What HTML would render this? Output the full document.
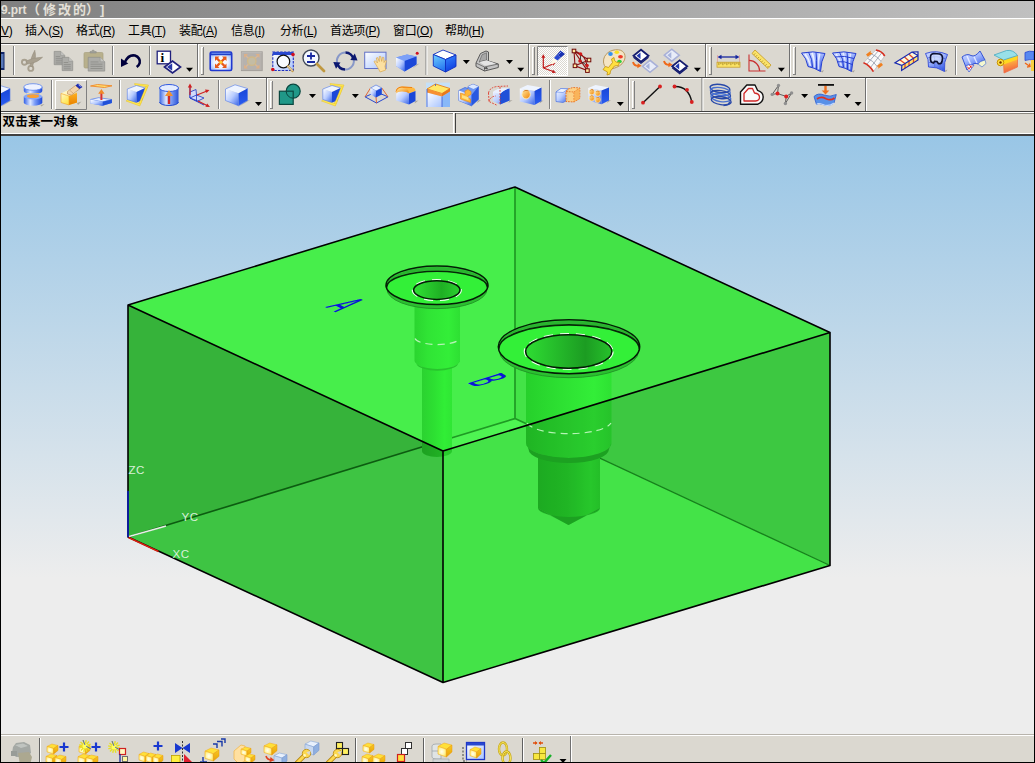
<!DOCTYPE html><html><head><meta charset="utf-8"><title>prt</title><style>
html,body{margin:0;padding:0;}
body{width:1035px;height:763px;overflow:hidden;background:#dbd8d0;position:relative;font-family:"Liberation Sans","Noto Sans CJK SC",sans-serif;}
#frame{position:absolute;left:0;top:0;width:1033px;height:761px;border:1px solid #000;z-index:5;pointer-events:none;}
#title{position:absolute;left:1px;top:1px;width:1033px;height:17px;background:linear-gradient(90deg,#808080 0%,#c0c0c0 100%);}
#title span{position:absolute;top:1px;line-height:17px;font-size:13px;font-weight:bold;color:#e4e0d8;white-space:nowrap;letter-spacing:0px;}
#menu{position:absolute;left:1px;top:18px;width:1033px;height:25px;background:#dbd8d0;border-top:1px solid #fff;box-sizing:border-box;}
#menu span{position:absolute;top:5px;font-size:12px;line-height:14px;color:#000;white-space:nowrap;letter-spacing:-0.35px;}
#menu u{text-decoration:underline;text-underline-offset:1px;}
.hl{position:absolute;left:1px;width:1033px;height:1px;}
#status{position:absolute;left:1px;top:113px;width:1033px;height:21px;}
#status b{position:absolute;left:1.5px;top:2px;font-size:12.5px;line-height:14px;color:#000;white-space:nowrap;letter-spacing:0.2px}
svg#g{position:absolute;left:0;top:0;}
</style></head><body>
<div id="title"><span style="left:0px;font-size:12px;letter-spacing:-0.1px">9.prt</span><span style="left:26px;font-size:13px;top:0px">（</span><span style="left:42px;font-size:13px;letter-spacing:2px;top:0px">修改的</span><span style="left:85px;font-size:13px;top:0px">）</span><span style="left:99px;top:0px">]</span></div>
<div id="menu"><span style="left:0px"><u>V</u>)</span><span style="left:24px">插入(<u>S</u>)</span><span style="left:75px">格式(<u>R</u>)</span><span style="left:127px">工具(<u>T</u>)</span><span style="left:178px">装配(<u>A</u>)</span><span style="left:230px">信息(<u>I</u>)</span><span style="left:279px">分析(<u>L</u>)</span><span style="left:329px">首选项(<u>P</u>)</span><span style="left:392px">窗口(<u>O</u>)</span><span style="left:444px">帮助(<u>H</u>)</span></div>
<div class="hl" style="top:43px;background:#404040"></div>
<div class="hl" style="top:44px;background:#fff"></div>
<div class="hl" style="top:77px;background:#404040"></div>
<div class="hl" style="top:78px;background:#fff"></div>
<div class="hl" style="top:111px;background:#404040"></div>
<div class="hl" style="top:112px;background:#fff"></div>
<div class="hl" style="top:133px;background:#fff"></div>
<div class="hl" style="top:134px;background:#404040"></div>
<div class="hl" style="top:135px;background:#404040"></div>
<div class="hl" style="top:734px;background:#b8b4ac"></div>
<div class="hl" style="top:735px;background:#fff"></div>
<div id="status"><b>双击某一对象</b></div>
<div style="position:absolute;left:1px;top:113px;width:452px;height:1px;background:#8a8880"></div>
<div style="position:absolute;left:453px;top:113px;width:1px;height:20px;background:#fff"></div>
<div style="position:absolute;left:455px;top:113px;width:579px;height:1px;background:#8a8880"></div>
<div style="position:absolute;left:455px;top:113px;width:1px;height:20px;background:#404040"></div>
<svg id="g" width="1035" height="763" viewBox="0 0 1035 763">
<defs>
<linearGradient id="bg" x1="0" y1="136" x2="0" y2="734" gradientUnits="userSpaceOnUse">
<stop offset="0" stop-color="#99c6e6"/><stop offset="0.74" stop-color="#ededed"/><stop offset="1" stop-color="#ededed"/></linearGradient>
<linearGradient id="cylA1" x1="414" y1="0" x2="460" y2="0" gradientUnits="userSpaceOnUse">
<stop offset="0" stop-color="#2ad42f"/><stop offset="0.3" stop-color="#30e435"/><stop offset="0.75" stop-color="#33ee38"/><stop offset="1" stop-color="#2ee033"/></linearGradient>
<linearGradient id="cylA2" x1="422" y1="0" x2="452" y2="0" gradientUnits="userSpaceOnUse">
<stop offset="0" stop-color="#2bd230"/><stop offset="0.4" stop-color="#2de032"/><stop offset="0.75" stop-color="#31ee36"/><stop offset="1" stop-color="#2fe634"/></linearGradient>
<linearGradient id="cylB1" x1="526" y1="0" x2="611" y2="0" gradientUnits="userSpaceOnUse">
<stop offset="0" stop-color="#26d02b"/><stop offset="0.35" stop-color="#2cde31"/><stop offset="0.8" stop-color="#33ee38"/><stop offset="1" stop-color="#2ee233"/></linearGradient>
<linearGradient id="cylB2" x1="538" y1="0" x2="600" y2="0" gradientUnits="userSpaceOnUse">
<stop offset="0" stop-color="#23c428"/><stop offset="0.45" stop-color="#27d02c"/><stop offset="0.85" stop-color="#2fe634"/><stop offset="1" stop-color="#2cdc31"/></linearGradient>
<linearGradient id="holeA" x1="414" y1="0" x2="460" y2="0" gradientUnits="userSpaceOnUse">
<stop offset="0" stop-color="#30e035"/><stop offset="0.6" stop-color="#1fb024"/><stop offset="1" stop-color="#2ad02f"/></linearGradient>
<linearGradient id="holeB" x1="526" y1="0" x2="611" y2="0" gradientUnits="userSpaceOnUse">
<stop offset="0" stop-color="#2edc33"/><stop offset="0.7" stop-color="#1c9c22"/><stop offset="1" stop-color="#26c02b"/></linearGradient>
<clipPath id="hsil">
<path d="M422,366 L422,451 A15,6 0 0 0 452,451 L452,366 Z"/>
<path d="M538,455 L538,508 A31,9 0 0 0 545,513 L568.5,525 L592,513 A31,9 0 0 0 600,508 L600,455 Z"/>
<path d="M526,355 L526,443 A42.7,15 0 0 0 611.5,443 L611.5,355 Z"/>
<path d="M526,443 A42.7,15 0 0 0 611.5,443 L609,449 A40,14 0 0 1 528.5,449 Z"/>
</clipPath>
</defs>
<rect x="1" y="136" width="1033" height="598" fill="url(#bg)"/>
<polygon points="128,305 515,187 830,332.5 443,451" fill="#43e347"/>
<polygon points="128,305 515,187 515,418.5 443,440.547 443,451" fill="#47ee4b"/>
<polygon points="443,440.547 515,418.5 528.526,424.812 443,451" fill="#4ef452"/>
<polygon points="128,305 443,451 443,440.547 128,537" fill="#36b33a"/>
<polygon points="128,537 443,440.547 443,682.5" fill="#3ec443"/>
<polygon points="528.526,424.812 830,332.5 830,565.5" fill="#3dc841"/>
<polygon points="443,451 528.526,424.812 830,565.5 443,682.5" fill="#44e348"/>
<path d="M515,187 L515,418.5 L443,440.547 M515,418.5 L528.526,424.812" stroke="#1f9a24" stroke-width="1.700" fill="none"/>
<path d="M443,440.547 L128,537" stroke="#0c5c10" stroke-width="1.600" fill="none"/>
<path d="M528.526,424.812 L830,565.5" stroke="#15801a" stroke-width="1.300" fill="none"/>
<path d="M422,366 L422,451 A15,6 0 0 0 452,451 L452,366 Z" fill="url(#cylA2)"/>
<path d="M414.5,296 L414.5,360 A22.7,9 0 0 0 460,360 L460,296 Z" fill="url(#cylA1)"/>
<path d="M414.5,360 A22.7,9 0 0 0 460,360 L458,364 A21,8 0 0 1 416.5,364 Z" fill="#28c42d"/>
<path d="M386,285.3 A51,19.3 0 0 0 488,285.3 L487,289.3 A50,19.3 0 0 1 387,289.3 Z" fill="#2bc030"/><path d="M387,289.3 A50,19.3 0 0 0 487,289.3" fill="none" stroke="#239a28" stroke-width="1"/><ellipse cx="437" cy="285.3" rx="51" ry="19.3" fill="#33f038"/><path d="M386,286.3 A51,19.3 0 0 1 488,286.3 A51,16.1 0 0 0 386,286.3 Z" fill="#2ab42f"/><path d="M386.5,287.3 A50.5,16.1 0 0 1 487.5,287.3" fill="none" stroke="#062808" stroke-width="1.600"/><ellipse cx="437" cy="285.3" rx="51" ry="19.3" fill="none" stroke="#041c06" stroke-width="1.5"/><ellipse cx="436.8" cy="290.1" rx="24.4" ry="10.4" fill="none" stroke="#f0fff0" stroke-width="1.4" stroke-dasharray="9,7"/><ellipse cx="436.8" cy="290.1" rx="23.2" ry="9.3" fill="url(#holeA)" stroke="#041c06" stroke-width="1.5"/>
<path d="M415,338.500 A22.7,7 0 0 0 460,338.500" fill="none" stroke="#b4f4b4" stroke-width="1.2" stroke-dasharray="7,5"/>
<path d="M538,455 L538,508 L568.5,525 L600,508 L600,455 Z" fill="url(#cylB2)"/>
<path d="M538,508 A31,9 0 0 0 600,508 L568.5,525 Z" fill="#22b828"/>
<path d="M526,355 L526,443 A42.7,15 0 0 0 611.5,443 L611.5,355 Z" fill="url(#cylB1)"/>
<path d="M526,443 A42.7,15 0 0 0 611.5,443 L609,449 A40,14 0 0 1 528.5,449 Z" fill="#22b828"/>
<g clip-path="url(#hsil)"><polygon points="128,305 443,451 443,682.5 128,537" fill="#003000" opacity="0.3"/><polygon points="443,451 830,332.5 830,565.5 443,682.5" fill="#003000" opacity="0.17"/></g>
<path d="M498.3,346.7 A70.7,27 0 0 0 639.7,346.7 L638.7,350.7 A69.7,27 0 0 1 499.3,350.7 Z" fill="#2bc030"/><path d="M499.3,350.7 A69.7,27 0 0 0 638.7,350.7" fill="none" stroke="#239a28" stroke-width="1"/><ellipse cx="569" cy="346.7" rx="70.7" ry="27" fill="#33f038"/><path d="M498.3,347.7 A70.7,27 0 0 1 639.7,347.7 A70.7,23.8 0 0 0 498.3,347.7 Z" fill="#2ab42f"/><path d="M498.8,348.7 A70.2,23.8 0 0 1 639.2,348.7" fill="none" stroke="#062808" stroke-width="1.600"/><ellipse cx="569" cy="346.7" rx="70.7" ry="27" fill="none" stroke="#041c06" stroke-width="1.5"/><ellipse cx="568.7" cy="351.5" rx="44.3" ry="17.8" fill="none" stroke="#f0fff0" stroke-width="1.4" stroke-dasharray="9,7"/><ellipse cx="568.7" cy="351.5" rx="43.1" ry="16.7" fill="url(#holeB)" stroke="#041c06" stroke-width="1.5"/>
<path d="M527,423 A42.7,13 0 0 0 611,423" fill="none" stroke="#b4f4b4" stroke-width="1.2" stroke-dasharray="7,5"/>
<g stroke="#000" stroke-width="1.6" fill="none" stroke-linejoin="round">
<path d="M128,305 L515,187 L830,332.5 L443,451 Z M128,305 L128,537 L443,682.5 L830,565.5 L830,332.5 M443,451 L443,682.5"/>
</g>
<path d="M128,537 L128,491" stroke="#0c1ca8" stroke-width="1.8"/>
<path d="M129,536.5 L166,526" stroke="#e8f0e8" stroke-width="1.5"/>
<path d="M128.5,537.5 L158.5,551.5" stroke="#d82010" stroke-width="1.6"/>
<g font-family="'Liberation Sans',sans-serif" font-size="11.6" fill="#d8f0d8" letter-spacing="0.3">
<text x="128.6" y="474">ZC</text><text x="181.600" y="520.8">YC</text><text x="172.6" y="557.8">XC</text></g>
<g font-family="'DejaVu Sans','Liberation Sans',sans-serif" font-size="22" fill="#0a14d8" stroke="#0a14d8" stroke-width="0.1">
<text transform="matrix(0.695,0.348,-1.962,0.629,325,307)" x="0" y="0">A</text>
<text transform="matrix(0.695,0.348,-2.05,0.64,466.5,382.5)" x="0" y="0">B</text>
</g>
<defs>
<linearGradient id="bf" x1="0" y1="0" x2="1" y2="1"><stop offset="0" stop-color="#ffffff"/><stop offset="0.5" stop-color="#b8ccff"/><stop offset="1" stop-color="#3a66e8"/></linearGradient>
<linearGradient id="bs" x1="0" y1="0" x2="0" y2="1"><stop offset="0" stop-color="#1846d8"/><stop offset="1" stop-color="#2a5cf0"/></linearGradient>
<linearGradient id="bt" x1="0" y1="0" x2="1" y2="0"><stop offset="0" stop-color="#eef4ff"/><stop offset="1" stop-color="#c4d6ff"/></linearGradient>
<linearGradient id="yf" x1="0" y1="0" x2="1" y2="1"><stop offset="0" stop-color="#fff8c0"/><stop offset="0.6" stop-color="#ffd83a"/><stop offset="1" stop-color="#f0a000"/></linearGradient>
<linearGradient id="ys" x1="0" y1="0" x2="0" y2="1"><stop offset="0" stop-color="#ffb020"/><stop offset="1" stop-color="#e88000"/></linearGradient>
<linearGradient id="cyl" x1="0" y1="0" x2="1" y2="0"><stop offset="0" stop-color="#3060e8"/><stop offset="0.35" stop-color="#dfe8ff"/><stop offset="0.6" stop-color="#7a9cf8"/><stop offset="1" stop-color="#1c48d8"/></linearGradient>
<linearGradient id="surf" x1="0" y1="0" x2="0.6" y2="1"><stop offset="0" stop-color="#ccd8ff"/><stop offset="0.45" stop-color="#a8bcff"/><stop offset="1" stop-color="#3c60e8"/></linearGradient>
<linearGradient id="win" x1="0" y1="0" x2="1" y2="1"><stop offset="0" stop-color="#ffffff"/><stop offset="1" stop-color="#a8c4ff"/></linearGradient>
<linearGradient id="og" x1="0" y1="0" x2="1" y2="1"><stop offset="0" stop-color="#ffe8a0"/><stop offset="1" stop-color="#f08000"/></linearGradient>
<linearGradient id="cf" x1="0" y1="0" x2="0.300" y2="1"><stop offset="0" stop-color="#70d0ff"/><stop offset="1" stop-color="#2878f0"/></linearGradient>
<linearGradient id="cs" x1="0" y1="0" x2="0.300" y2="1"><stop offset="0" stop-color="#3888ff"/><stop offset="1" stop-color="#1040e0"/></linearGradient>
<linearGradient id="yf2" x1="0" y1="0" x2="1" y2="1"><stop offset="0" stop-color="#fffde8"/><stop offset="0.55" stop-color="#ffe860"/><stop offset="1" stop-color="#ffc818"/></linearGradient>
<linearGradient id="ys2" x1="0" y1="0" x2="0" y2="1"><stop offset="0" stop-color="#ffc420"/><stop offset="1" stop-color="#f09800"/></linearGradient>
<linearGradient id="sg7" x1="0" y1="0" x2="0.200" y2="1"><stop offset="0" stop-color="#ffd030"/><stop offset="0.400" stop-color="#ffb040"/><stop offset="1" stop-color="#f06040"/></linearGradient>
<radialGradient id="winr" cx="0.5" cy="0.55" r="0.65"><stop offset="0" stop-color="#ffffff"/><stop offset="0.5" stop-color="#eef4ff"/><stop offset="1" stop-color="#88acf8"/></radialGradient>
<radialGradient id="yf3" cx="0.45" cy="0.5" r="0.7"><stop offset="0" stop-color="#fffef0"/><stop offset="0.5" stop-color="#fff4a0"/><stop offset="1" stop-color="#ffd830"/></radialGradient>
<linearGradient id="ys3" x1="0" y1="0" x2="0" y2="1"><stop offset="0" stop-color="#f8c820"/><stop offset="1" stop-color="#e8a008"/></linearGradient>
<pattern id="chk" width="2" height="2" patternUnits="userSpaceOnUse"><rect width="2" height="2" fill="#fff"/><rect width="1" height="1" fill="#dbd8d0"/><rect x="1" y="1" width="1" height="1" fill="#dbd8d0"/></pattern>
</defs>
<rect x="1" y="52" width="3.500" height="18" fill="#102468"/><rect x="1" y="54" width="2.500" height="14" fill="#5878b8"/>
<rect x="13" y="46" width="1" height="29" fill="#808080"/><rect x="14" y="46" width="1" height="29" fill="#fff"/>
<rect x="112" y="46" width="1" height="29" fill="#808080"/><rect x="113" y="46" width="1" height="29" fill="#fff"/>
<rect x="149" y="46" width="1" height="29" fill="#808080"/><rect x="150" y="46" width="1" height="29" fill="#fff"/>
<rect x="425.5" y="46" width="1" height="29" fill="#808080"/><rect x="426.5" y="46" width="1" height="29" fill="#fff"/>
<rect x="955" y="46" width="1" height="29" fill="#808080"/><rect x="956" y="46" width="1" height="29" fill="#fff"/>
<rect x="197" y="44" width="1" height="33" fill="#707070"/><rect x="198" y="44" width="1" height="33" fill="#fff"/>
<rect x="528" y="44" width="1" height="33" fill="#707070"/><rect x="529" y="44" width="1" height="33" fill="#fff"/>
<rect x="705" y="44" width="1" height="33" fill="#707070"/><rect x="706" y="44" width="1" height="33" fill="#fff"/>
<rect x="789" y="44" width="1" height="33" fill="#707070"/><rect x="790" y="44" width="1" height="33" fill="#fff"/>
<rect x="201" y="47" width="3" height="28" fill="#dbd8d0"/><rect x="201" y="47" width="1" height="28" fill="#fff"/><rect x="201" y="47" width="3" height="1" fill="#fff"/><rect x="203" y="47" width="1" height="28" fill="#808080"/><rect x="201" y="74" width="3" height="1" fill="#808080"/>
<rect x="532" y="47" width="3" height="28" fill="#dbd8d0"/><rect x="532" y="47" width="1" height="28" fill="#fff"/><rect x="532" y="47" width="3" height="1" fill="#fff"/><rect x="534" y="47" width="1" height="28" fill="#808080"/><rect x="532" y="74" width="3" height="1" fill="#808080"/>
<rect x="709" y="47" width="3" height="28" fill="#dbd8d0"/><rect x="709" y="47" width="1" height="28" fill="#fff"/><rect x="709" y="47" width="3" height="1" fill="#fff"/><rect x="711" y="47" width="1" height="28" fill="#808080"/><rect x="709" y="74" width="3" height="1" fill="#808080"/>
<rect x="793" y="47" width="3" height="28" fill="#dbd8d0"/><rect x="793" y="47" width="1" height="28" fill="#fff"/><rect x="793" y="47" width="3" height="1" fill="#fff"/><rect x="795" y="47" width="1" height="28" fill="#808080"/><rect x="793" y="74" width="3" height="1" fill="#808080"/>
<rect x="537" y="46" width="31" height="30" fill="url(#chk)"/><path d="M537.5,76 V46.5 H568" fill="none" stroke="#808080" stroke-width="1"/><path d="M537.5,75.5 H567.5 V46.5" fill="none" stroke="#fff" stroke-width="1"/>
<g transform="translate(541,49)"><path d="M2.300,19 V7.500 M2.300,19 L12.500,14.800 M2.300,19 L13,22.800" stroke="#c01818" stroke-width="1.200" fill="none"/><path d="M2.300,5.200 l2,3.600 h-4z M14.500,13.800 l-3.800,-0.300 l1.400,3.300z M15,23.800 l-4,0.300 l1,-3.400z" fill="#c01818"/><path d="M9.500,14.500 L13,9 L16.500,11.500 L11.500,15.500 Z" fill="#fffbe8" opacity="0.950"/><path d="M13,9 L16,5.500 L19.800,8.500 L16.500,11.500 Z" fill="#2848d0"/><path d="M16,5.500 L19.500,1.500 L24,5 L19.800,8.500 Z" fill="#1830b0"/><path d="M17.500,5.500 l3,-3" stroke="#88a8ff" stroke-width="0.9"/></g>
<g transform="translate(20,49)"><g fill="none" stroke="#a8a090" stroke-width="1.9"><circle cx="4.4" cy="13.2" r="2.5"/><circle cx="10.8" cy="19.4" r="2.5"/></g><path d="M10,17 Q10.500,8 14.8,1.2 Q17,8 13.200,15 L12.5,17.8 Z" fill="#a8a090" stroke="#958d7d" stroke-width="0.5"/><path d="M6.500,11.8 Q13,8.5 22.6,8.2 Q18,13.5 9.5,14.8 L7,15 Z" fill="#a8a090" stroke="#958d7d" stroke-width="0.5"/></g>
<g transform="translate(52,49)"><path d="M2.2,2.4 h6.500 l4,4 v9.300 h-10.500 z" fill="#acaca8" stroke="#8e8e8a" stroke-width="0.7"/><path d="M8.7,2.4 v4 h4" fill="#c4c4c0" stroke="#8e8e8a" stroke-width="0.5"/><rect x="3.7" y="7.2" width="4.5" height="0.9" fill="#8e8e8a"/><rect x="3.7" y="9.3" width="7" height="0.9" fill="#8e8e8a"/><rect x="3.7" y="11.4" width="7" height="0.9" fill="#8e8e8a"/><rect x="3.7" y="13.5" width="7" height="0.9" fill="#8e8e8a"/><path d="M10.2,8.3 h6.500 l4,4 v9.300 h-10.500 z" fill="#acaca8" stroke="#8e8e8a" stroke-width="0.7"/><path d="M16.7,8.3 v4 h4" fill="#c4c4c0" stroke="#8e8e8a" stroke-width="0.5"/><rect x="11.7" y="13.1" width="4.5" height="0.9" fill="#8e8e8a"/><rect x="11.7" y="15.2" width="7" height="0.9" fill="#8e8e8a"/><rect x="11.7" y="17.3" width="7" height="0.9" fill="#8e8e8a"/><rect x="11.7" y="19.4" width="7" height="0.9" fill="#8e8e8a"/></g>
<g transform="translate(83,49)"><rect x="1" y="3.5" width="19" height="15.5" rx="1.2" fill="#b8b08c" stroke="#a8a080" stroke-width="0.7"/><path d="M7,4 v-1.500 h1.500 l0.8,-1.300 h1.600 l0.800,1.300 h1.500 v1.500 z" fill="#a0a098" stroke="#8a8a84" stroke-width="0.5"/><path d="M5.2,8.3 h12 l4.500,4.500 v9.300 h-16.500 z" fill="#acaca8" stroke="#8e8e8a" stroke-width="0.7"/><path d="M17.2,8.3 v4.500 h4.500" fill="#c4c4c0" stroke="#8e8e8a" stroke-width="0.5"/><rect x="7.5" y="12.5" width="8" height="0.9" fill="#8e8e8a"/><rect x="7.5" y="14.7" width="12" height="0.9" fill="#8e8e8a"/><rect x="7.5" y="16.9" width="12" height="0.9" fill="#8e8e8a"/><rect x="7.5" y="19.1" width="12" height="0.9" fill="#8e8e8a"/></g>
<g transform="translate(118.5,49)"><path d="M6.400,13 C9,7.500 13,5.800 16.500,6.500 C20,7.500 22,11 21.200,14 C20.800,15.500 19.500,17 18.200,18" fill="none" stroke="#00003c" stroke-width="2.600"/><path d="M2.500,9.400 L2.500,18 L9.800,14.600 Z" fill="#00003c"/></g>
<g transform="translate(156,49)"><rect x="1.2" y="2.200" width="13.300" height="12.600" fill="#fff" stroke="#20207c" stroke-width="1.3"/><text x="4.6" y="13" font-family="'Liberation Serif',serif" font-weight="bold" font-size="13.5" fill="#000">i</text><path d="M8.500,18 L16.500,12 L24.500,18 L16.500,24 Z" fill="#fff" stroke="#20207c" stroke-width="1.7"/><path d="M11,18 L16.200,14.200 L16.200,21.800 Z" fill="#2838a8"/></g>
<g transform="translate(209,49)"><rect x="1.200" y="3" width="21.500" height="18.500" rx="1.500" fill="url(#winr)" stroke="#2038d0" stroke-width="1.600"/><path d="M1.500,6.200 V4.500 Q1.500,3.200 3,3.200 H21 Q22.500,3.200 22.500,4.500 V6.200 Z" fill="#2040c8"/><path d="M2.500,4.300 H21.500" stroke="#88a8ff" stroke-width="0.800"/><g stroke="#e85818" stroke-width="2.400"><path d="M8,9.500 L15.500,17 M15.500,9.500 L8,17"/></g><g fill="#e85818"><path d="M6,7.500 h4.500 l-4.500,4.500z M17.500,7.500 v4.500 l-4.500,-4.500z M6,19 v-4.500 l4.500,4.500z M17.500,19 h-4.500 l4.500,-4.500z"/></g><circle cx="11.750" cy="13.250" r="1.700" fill="#ffc830"/></g>
<g transform="translate(240,49)"><rect x="1.400" y="2.800" width="20.800" height="18.800" fill="#b6b2ae" stroke="#a4a09c" stroke-width="1"/><path d="M1.900,21 V3.300 H21.700" fill="none" stroke="#c4c0bc" stroke-width="0.800"/><g stroke="#d8b898" stroke-width="1.500"><path d="M5.500,6.500 L18,18 M18,6.500 L5.500,18"/></g><g fill="#dcb088"><path d="M4,5 h4 l-4,4z M19.500,5 v4 l-4,-4z M4,19.500 v-4 l4,4z M19.500,19.500 h-4 l4,-4z"/></g><circle cx="11.800" cy="12.200" r="4.200" fill="#c4bca4" stroke="#d0b888" stroke-width="1.300"/></g>
<g transform="translate(271,49)"><rect x="1.800" y="3" width="20.500" height="18.500" fill="url(#win)" stroke="#2030c0" stroke-width="1.100" stroke-dasharray="2.500,1.200"/><rect x="1.800" y="3" width="20.500" height="3" fill="#2848d0"/><circle cx="12.400" cy="12.500" r="6.300" fill="#f8fbff" stroke="#101010" stroke-width="1.200"/><path d="M17,17.200 L21.500,22" stroke="#c8a050" stroke-width="2.400" stroke-linecap="round"/><path d="M17,17.200 L21.500,22" stroke="#fff" stroke-width="0.700"/><circle cx="22" cy="5.600" r="1.800" fill="#d01020"/><circle cx="1.800" cy="20.500" r="1.800" fill="#d01020"/></g>
<g transform="translate(302,49)"><circle cx="9" cy="9" r="8" fill="#f4f8ff" stroke="#404858" stroke-width="1.4"/><path d="M5,7 h8 M9,3.5 v7 M5,13 h8" stroke="#1828a0" stroke-width="1.8"/><path d="M15,15 L22,22" stroke="#c09840" stroke-width="2.8" stroke-linecap="round"/></g>
<g transform="translate(333,49)"><path d="M4.500,15 A8.500,8.500 0 0 1 12.500,3.500" fill="none" stroke="#8898c8" stroke-width="2"/><path d="M20.300,9 A8.500,8.500 0 0 1 12,20.500" fill="none" stroke="#8898c8" stroke-width="2"/><path d="M12.500,3.500 A8.500,8.500 0 0 1 20.500,10" fill="none" stroke="#0c1870" stroke-width="2.6"/><path d="M12,20.500 A8.500,8.500 0 0 1 4.200,14" fill="none" stroke="#0c1870" stroke-width="2.6"/><path d="M17.300,11 L21.800,4.500 L24.500,11.500 Z" fill="#0c1870"/><path d="M7.500,13.500 L3,19.800 L0.300,13 Z" fill="#0c1870"/></g>
<g transform="translate(364,49)"><rect x="0.700" y="3.200" width="21.300" height="16.300" fill="url(#win)" stroke="#6070c8" stroke-width="1"/><path d="M10,12.500 l1.300,-0.800 l2.200,2.300 l-1.200,-5 l1.300,-0.500 l1.700,4 l0,-5 l1.400,-0.100 l1,5 l0.800,-4.200 l1.300,0.300 l0.200,5 l1.300,-2.300 l1.100,0.600 l-1.400,5.500 l0.700,3.700 l-5.500,2 l-2.500,-4.500 z" fill="#fce0a0" stroke="#d8a850" stroke-width="0.7"/></g>
<g transform="translate(395,49)"><path d="M1,8.500 L12,5.500 L21.500,7.500 L21.500,15.500 L9.500,22.500 L1,17 Z" fill="#6088f0"/><path d="M1,8.500 L12,5.500 L21.500,7.500 L9.500,12 Z" fill="#7ca0f8"/><path d="M9.500,12 L21.500,7.500 L21.500,15.500 L9.500,22.500 Z" fill="#1c48d8"/><path d="M1,8.500 L9.500,12 L9.500,22.500 L1,17 Z" fill="url(#bf)"/><path d="M21.500,15.500 l3,-1 l-7,5z" fill="#a8a49c"/><circle cx="22.200" cy="4.200" r="1.500" fill="#d01020"/></g>
<g transform="translate(432.5,49)"><path d="M0.800,5.500 L10.500,1 L23.500,6 L13,10.500 Z" fill="#fff" stroke="#1030c0" stroke-width="0.9"/><path d="M0.800,5.500 L13,10.500 L13,23 L0.800,17 Z" fill="url(#cf)" stroke="#1030c0" stroke-width="0.9"/><path d="M13,10.500 L23.500,6 L23.500,17.500 L13,23 Z" fill="url(#cs)" stroke="#1030c0" stroke-width="0.9"/></g>
<g transform="translate(475,49)"><path d="M1,14 L5.500,4.500 L11,2 L13.500,3 L13.500,12 L23.300,15 L23.300,18.500 L9.500,22 L1,17.500 Z" fill="#c4c4c4" stroke="#585858" stroke-width="1"/><path d="M4.200,13 L7,5.800 L11.500,3.800 L11.500,11.200 Z" fill="#a8a8a8" stroke="#686868" stroke-width="0.7"/><path d="M1,14 L9.500,18 L23.300,15 M9.500,18 L9.500,22 M4.200,13 L11.500,11.200 L13.500,12" stroke="#606060" stroke-width="0.800" fill="none"/><path d="M4.200,13 L11.500,11.200 L21,14.500 L10,16.800Z" fill="#e4e4e4"/><path d="M9.500,19.300 l2.500,-0.500 v1.500" stroke="#202020" stroke-width="1" fill="none"/></g>
<g transform="translate(570,49)"><path d="M4,2 L5,16.800 L17.400,21.600 Z M4,2 Q17,5 17.400,21.600 M5,16.800 L19,11 M4,2 L19,11" fill="none" stroke="#8c1010" stroke-width="1.100"/><path d="M10.500,5 V12 L17,16.500" fill="none" stroke="#303030" stroke-width="0.9"/><g fill="#ffe8a0" stroke="#700808" stroke-width="1"><rect x="2.200" y="0.200" width="3.600" height="3.600"/><rect x="3.200" y="15" width="3.600" height="3.600"/><rect x="15.600" y="19.800" width="3.600" height="3.600"/><rect x="17.200" y="9.200" width="3.600" height="3.600"/></g><g fill="#d01818"><circle cx="10.500" cy="5" r="1.800"/><circle cx="10" cy="12" r="1.800"/><circle cx="17" cy="16.500" r="1.800"/></g></g>
<g transform="translate(602,49)"><path d="M1.500,13 C1,5 9,0 16.500,0.800 C22.500,1.500 24.500,7 22,12 C20,16 15.500,18.500 11,19.500 C5,21 2,18 1.500,13 Z" fill="#f4e4c4" stroke="#b89860" stroke-width="1"/><ellipse cx="8.500" cy="5" rx="2.300" ry="1.900" fill="#3090f0"/><ellipse cx="14.800" cy="3.300" rx="2.300" ry="1.800" fill="#f8e020"/><ellipse cx="18.500" cy="7.800" rx="2.400" ry="1.700" fill="#f03828"/><ellipse cx="17.500" cy="12.500" rx="2.300" ry="1.800" fill="#30d040"/><path d="M1,20.500 l2.500,-3 l3,1 l4,-5 l-1,-3.500 l2.500,-1.500 l0.500,3 l2.500,2 l2.500,-0.500 l-1,3.500 l-4,0.500 l-4,5 l-0.500,3 l-3,1 l0.500,-3 z" fill="#ffe040" stroke="#c09010" stroke-width="0.800"/></g>
<g transform="translate(632,49)"><path d="M1.5,6.7 l7.500,-6 l7.500,6 l-7.500,6 z" fill="#fff" stroke="#141c70" stroke-width="1.800"/><path d="M4.5,6.7 l4,-3.300 v6.600 z" fill="#2038b0"/><path d="M1.5,8.2 l7.500,6 l7.500,-6" fill="none" stroke="#141c70" stroke-width="1.200"/><path d="M10.5,17.3 l7.500,-6 l7.500,6 l-7.500,6 z" fill="#e8ecf8" stroke="#a8b0d8" stroke-width="1.500"/><path d="M13.5,17.3 l4,-3.300 v6.600 z" fill="#a8b4dc"/><path d="M1,13 q1,4 5.500,3.800" fill="none" stroke="#f06818" stroke-width="1.900"/><path d="M5.8,14.2 l3.800,2.600 l-4.300,2.400z" fill="#f06818"/></g>
<g transform="translate(664,49)"><path d="M0.3,6.2 l7.500,-6 l7.500,6 l-7.500,6 z" fill="#e8ecf8" stroke="#a8b0d8" stroke-width="1.500"/><path d="M3.3,6.2 l4,-3.300 v6.600 z" fill="#a8b4dc"/><path d="M8.2,17.3 l7.500,-6 l7.500,6 l-7.500,6 z" fill="#fff" stroke="#141c70" stroke-width="1.800"/><path d="M11.2,17.3 l4,-3.300 v6.600 z" fill="#2038b0"/><path d="M8.2,18.8 l7.500,6 l7.500,-6" fill="none" stroke="#141c70" stroke-width="1.200"/><path d="M0,12 q1,4 5.500,3.800" fill="none" stroke="#f06818" stroke-width="1.900"/><path d="M4.8,13.2 l3.800,2.600 l-4.300,2.400z" fill="#f06818"/></g>
<g transform="translate(716.5,49)"><path d="M1,6 v8 M23,6 v8" stroke="#e0a0a0" stroke-width="0.800"/><path d="M3,8 H21" stroke="#1828a0" stroke-width="1.300"/><path d="M1,8 l4,-2.200 v4.400z M23,8 l-4,-2.200 v4.400z" fill="#1828a0"/><rect x="0.500" y="13.200" width="23" height="5" fill="#fce468" stroke="#c8a030" stroke-width="0.800"/><rect x="2" y="13.600" width="0.800" height="2.6" fill="#987818"/><rect x="4" y="13.600" width="0.800" height="1.6" fill="#987818"/><rect x="6" y="13.600" width="0.800" height="2.6" fill="#987818"/><rect x="8" y="13.600" width="0.800" height="1.6" fill="#987818"/><rect x="10" y="13.600" width="0.800" height="2.6" fill="#987818"/><rect x="12" y="13.600" width="0.800" height="1.6" fill="#987818"/><rect x="14" y="13.600" width="0.800" height="2.6" fill="#987818"/><rect x="16" y="13.600" width="0.800" height="1.6" fill="#987818"/><rect x="18" y="13.600" width="0.800" height="2.6" fill="#987818"/><rect x="20" y="13.600" width="0.800" height="1.6" fill="#987818"/><rect x="22" y="13.600" width="0.800" height="2.6" fill="#987818"/></g>
<g transform="translate(747.5,49)"><path d="M1.500,5.500 V22 H18" fill="none" stroke="#c83030" stroke-width="1.100"/><path d="M1.500,11.400 A10.600,10.600 0 0 1 12.100,22" fill="none" stroke="#c83030" stroke-width="1.100"/><path d="M4.500,4.500 L7.500,1 L23.500,16 L20.500,19.500 Z" fill="#fce468" stroke="#c8a030" stroke-width="0.900"/><path d="M6.5,5.8 l1.200,-1.400" stroke="#987818" stroke-width="0.700"/><path d="M8.4,7.6 l1.200,-1.400" stroke="#987818" stroke-width="0.700"/><path d="M10.3,9.4 l1.200,-1.400" stroke="#987818" stroke-width="0.700"/><path d="M12.2,11.2 l1.200,-1.400" stroke="#987818" stroke-width="0.700"/><path d="M14.1,13 l1.200,-1.400" stroke="#987818" stroke-width="0.700"/><path d="M16,14.8 l1.200,-1.400" stroke="#987818" stroke-width="0.700"/><path d="M17.9,16.6 l1.200,-1.400" stroke="#987818" stroke-width="0.700"/><path d="M19.8,18.4 l1.200,-1.400" stroke="#987818" stroke-width="0.700"/></g>
<g transform="translate(801,49)"><path d="M19.500,22.500 l3.500,-1.500 l-1.500,2.500z" fill="#a8a49c"/><path d="M0.500,4 Q12,1.500 24,4.500 Q20,12 19.500,22.500 Q13,18.500 7,17.500 Q5.500,9 0.500,4 Z" fill="url(#surf)" stroke="#2840d0" stroke-width="1"/><path d="M4,5 Q8,10 9.500,17 M11,3.800 Q13.500,10 13.500,18.800 M18.500,4.500 Q17,12 17.500,20.500" fill="none" stroke="#fff" stroke-width="1.800" opacity="0.750"/><path d="M7.500,3 Q11.500,10 11.500,18.300 M15,3.300 Q16,11 15.500,20" fill="none" stroke="#2840d0" stroke-width="1"/></g>
<g transform="translate(832,49)"><path d="M19.500,22.500 l3.500,-1.500 l-1.500,2.500z" fill="#a8a49c"/><path d="M0.500,4 Q12,1.500 24,4.500 Q20,12 19.500,22.500 Q13,18.500 7,17.500 Q5.500,9 0.500,4 Z" fill="url(#surf)" stroke="#2840d0" stroke-width="1"/><path d="M4,5 Q8,10 9.500,17 M11,3.800 Q13.500,10 13.500,18.800 M18.500,4.500 Q17,12 17.500,20.500" fill="none" stroke="#fff" stroke-width="1.600" opacity="0.650"/><path d="M7.500,3 Q11.500,10 11.500,18.300 M15,3.300 Q16,11 15.500,20 M3,8 Q12,6 22,9.500 M5.300,12.800 Q12,11.500 20.300,15.500" fill="none" stroke="#2840d0" stroke-width="1"/></g>
<g transform="translate(862.5,49)"><path d="M13.400,1 Q19.500,2 22.200,7 L10.900,22.600 Q7,16 1,13.800 Z" fill="#fafafa" stroke="#b8b8c0" stroke-width="0.700"/><path d="M9.300,5.200 Q14.500,7 18.400,12.200 M5.200,9.500 Q10.500,11.500 14.600,17.400 M16,1.600 L4.500,15 M19.500,3.500 L8,18.500" fill="none" stroke="#9098a8" stroke-width="0.800"/><path d="M13.400,1 Q19.500,2 22.200,7" fill="none" stroke="#d83020" stroke-width="1.700"/><path d="M1,13.800 Q7,16 10.900,22.600" fill="none" stroke="#d83020" stroke-width="1.700"/><path d="M3.500,5.500 l4.800,-3.800 l-0.200,2 l2,0.500 l-4.800,3.500z M20.500,16 l-4.800,3.800 l0.200,-2 l-2,-0.500 l4.800,-3.500z" fill="#f08020"/></g>
<g transform="translate(895,49)"><path d="M0,13.800 L17,3 L23,2.800 L23,11 L6.600,21.400 L6.800,16.500 Z" fill="#fff8d8"/><path d="M6.800,16.500 L23,6.500 V11 L6.600,21.400Z" fill="#ffe070"/><path d="M5,11 L10,14.500 M9.500,8 L14,12 M14,5.200 L18.500,9.300 M10,19.200 L10,14.500 M14,16.700 L14,12 M18.500,13.800 L18.500,9.300" stroke="#e04828" stroke-width="1.300"/><path d="M0,13.800 L17,3 L23,2.800 L23,11 L6.600,21.400 L6.800,16.500 Z M6.800,16.500 L23,6.500 M17,3 L23,6.500" fill="none" stroke="#1828b0" stroke-width="1.200"/></g>
<g transform="translate(925,49)"><path d="M19,22 l3.500,-1.500 l-1.500,2.500z" fill="#a8a49c"/><path d="M0.500,4.500 Q11,0.500 22.500,5.500 Q18.500,13 19.500,22.500 Q12,17.500 3.500,18 Q4,10 0.500,4.500 Z" fill="url(#surf)" stroke="#3048d8" stroke-width="0.900"/><path d="M8,2.800 Q10.500,10 9.800,18 M15,3.200 Q15.500,11 15,20 M2.500,9 Q12,6 20.800,10 M3.500,13.500 Q12,11.500 19.500,15.500" fill="none" stroke="#5068e0" stroke-width="0.800"/><path d="M5.500,8 Q5.500,4.500 9.500,4.500 L14.500,5 Q17.500,5.500 17.500,9 L17,12.500 Q16.500,15 13.500,14.700 L12,12.500 L9.500,12.300 L8.500,14 Q5.500,13.500 5.500,10.500 Z" fill="#d8e4ff" fill-opacity="0.700" stroke="#0c1030" stroke-width="1.600"/></g>
<g transform="translate(962,49)"><path d="M0,8 Q5,4 9,6.500 Q13,8.500 18,2 L23,11 Q18,12 16,15 Q12,13 8,17.500 L5,21 Z" fill="url(#surf)" stroke="#2848d0" stroke-width="0.900"/><path d="M5,7 Q7,12 9,16 M12,7.800 Q13.500,11 15,14" stroke="#fff" stroke-width="1.500" opacity="0.700" fill="none"/><path d="M3.500,17 Q7,14.500 12,16 L7,23 Z" fill="#fff" stroke="#2848d0" stroke-width="0.700"/><path d="M5,17.500 l3,3 M7.500,16 l2,3 M6,20.500 l4,-4" stroke="#e02020" stroke-width="1"/><path d="M16,15 Q18,12 23,11 L24,14.500 L20,18 Z" fill="#f4f8d0" stroke="#5078d0" stroke-width="0.700"/></g>
<g transform="translate(993.5,49)"><path d="M10,11 L24,6.500 V18 L10.500,24 Z" fill="url(#sg7)" stroke="#f07048" stroke-width="0.800"/><path d="M10,11 L24,6.500 V10.500 L10,15.500 Z" fill="#ffd820"/><path d="M0.500,6 L13,1.500 Q20,0.500 24,6.500 L10,11 Z" fill="#98e0e8" stroke="#48a8c0" stroke-width="0.800"/><circle cx="7" cy="13.500" r="3.300" fill="#ffe040" stroke="#c89000" stroke-width="1"/><circle cx="7" cy="13.500" r="1.200" fill="#703000"/></g>
<g transform="translate(1024,49)"><path d="M1,3.500 Q5,1.500 10,2.500 V11 Q5,10 1,11.500 Z" fill="#5888f0" stroke="#2848d0" stroke-width="0.800"/><rect x="7" y="11" width="3" height="11" fill="#f8d040"/><path d="M1,14 l5,3.500 M3,18 l3,-0.500 l-0.500,-3" stroke="#f06818" stroke-width="1.400" fill="none"/></g>
<path d="M186,67.7 h7 l-3.5,4 z" fill="#000"/>
<path d="M517.2,67.7 h7 l-3.5,4 z" fill="#000"/>
<path d="M693.9,67.7 h7 l-3.5,4 z" fill="#000"/>
<path d="M777.9,67.7 h7 l-3.5,4 z" fill="#000"/>
<path d="M462.9,60 h7 l-3.5,4 z" fill="#000"/>
<path d="M506,60 h7 l-3.5,4 z" fill="#000"/>
<rect x="51" y="80" width="1" height="29" fill="#808080"/><rect x="52" y="80" width="1" height="29" fill="#fff"/>
<rect x="119" y="80" width="1" height="29" fill="#808080"/><rect x="120" y="80" width="1" height="29" fill="#fff"/>
<rect x="218" y="80" width="1" height="29" fill="#808080"/><rect x="219" y="80" width="1" height="29" fill="#fff"/>
<rect x="549" y="80" width="1" height="29" fill="#808080"/><rect x="550" y="80" width="1" height="29" fill="#fff"/>
<rect x="266" y="78" width="1" height="33" fill="#707070"/><rect x="267" y="78" width="1" height="33" fill="#fff"/>
<rect x="628" y="78" width="1" height="33" fill="#707070"/><rect x="629" y="78" width="1" height="33" fill="#fff"/>
<rect x="701.5" y="78" width="1" height="33" fill="#707070"/><rect x="702.5" y="78" width="1" height="33" fill="#fff"/>
<rect x="865" y="78" width="1" height="33" fill="#707070"/><rect x="866" y="78" width="1" height="33" fill="#fff"/>
<rect x="270" y="81" width="3" height="28" fill="#dbd8d0"/><rect x="270" y="81" width="1" height="28" fill="#fff"/><rect x="270" y="81" width="3" height="1" fill="#fff"/><rect x="272" y="81" width="1" height="28" fill="#808080"/><rect x="270" y="108" width="3" height="1" fill="#808080"/>
<rect x="632" y="81" width="3" height="28" fill="#dbd8d0"/><rect x="632" y="81" width="1" height="28" fill="#fff"/><rect x="632" y="81" width="3" height="1" fill="#fff"/><rect x="634" y="81" width="1" height="28" fill="#808080"/><rect x="632" y="108" width="3" height="1" fill="#808080"/>
<path d="M55.5,109 V80.5 H86" fill="none" stroke="#fff" stroke-width="1"/><path d="M55.5,109.5 H86.5 V80.5" fill="none" stroke="#808080" stroke-width="1"/>
<g transform="translate(-13,83)"><path d="M22.500,17.500 l3,-0.500 l-11,6.500z" fill="#a8a49c" opacity="0.8"/><path d="M1,6 L10.500,1.800 L23,5.500 L14,10.200 Z" fill="#eef4ff"/><path d="M1,6 L14,10.200 L14,22.800 L1,17.500 Z" fill="url(#bf)"/><path d="M14,10.200 L23,5.500 L23,17.500 L14,22.800 Z" fill="url(#bs)"/><path d="M1,6 L10.500,1.800 L23,5.500 M1,6 V17.500 L14,22.800 L23,17.500 V5.500" fill="none" stroke="#5078e8" stroke-width="0.6"/></g>
<g transform="translate(21.5,83)"><path d="M19,22 l4,-1 l-3,2.500z" fill="#a8a49c"/><path d="M2.300,4 v4 a9.200,3.300 0 0 0 18.500,0 v-4z" fill="url(#cyl)"/><ellipse cx="11.500" cy="4" rx="9.200" ry="3.300" fill="#eef2ff" stroke="#6088f0" stroke-width="0.800"/><path d="M5.500,10 v3.500 a6,2 0 0 0 12,0 v-3.500z" fill="url(#og)"/><path d="M2.300,13.500 v6 a9.200,3.300 0 0 0 18.500,0 v-6z" fill="url(#cyl)"/><ellipse cx="11.500" cy="13.500" rx="9.200" ry="3" fill="#88a8f8"/><path d="M5.500,12.500 a6,2 0 0 0 12,0 a6,1.800 0 0 1 -12,0z" fill="#f89828"/><ellipse cx="11.500" cy="13.200" rx="6" ry="1.900" fill="#f8a038"/></g>
<g transform="translate(59,83)"><path d="M18,20 l4.500,-1.500 l-3.500,3.500z" fill="#a8a49c"/><path d="M2,10.500 L9.500,7 L18,10 L18,19.500 L10,22 L2,19.500 Z" fill="url(#yf2)"/><path d="M10,13 L18,10 L18,19.500 L10,22 Z" fill="url(#ys)"/><path d="M2,10.500 L9.500,7 L18,10 L10,13 Z" fill="#fff6c0"/><path d="M2,10.500 L10,13 V22 L2,19.500 Z M10,13 L18,10" fill="none" stroke="#f0a020" stroke-width="0.600"/><path d="M8.500,8.500 L16.500,2.500 L20.500,6 L12.500,12 L8.500,11 Z" fill="#f4d4a8" stroke="#c09060" stroke-width="0.700"/><path d="M11,7.500 L14.500,10.500" stroke="#c09060" stroke-width="0.600"/><path d="M16.500,2.500 L19,0.500 L23.500,4 L20.500,6 Z" fill="#1c2cb0"/><path d="M19.500,1.800 l2.200,1.800" stroke="#a8b8ff" stroke-width="0.900"/></g>
<g transform="translate(88.5,83)"><path d="M2,3 L9,1.500 L23.500,2.800 L16,4.500 Z" fill="#ffe070" stroke="#f08828" stroke-width="0.900"/><path d="M1.900,16.500 L10,14.700 L23.400,16.500 L23.400,20 L14,22.800 L1.900,20.500 Z" fill="#6088f0"/><path d="M1.900,16.500 L10,14.700 L23.400,16.500 L14,18.800 Z" fill="#e4ecff" stroke="#5078e8" stroke-width="0.600"/><path d="M14,18.800 L23.400,16.500 V20 L14,22.800 Z" fill="#2050d8"/><path d="M1.900,16.500 L14,18.800 V22.800 L1.900,20.500Z" fill="url(#bf)"/><path d="M12.900,17 V10" stroke="#d83030" stroke-width="2"/><path d="M12.900,6 l3.200,4.800 h-6.400z" fill="#f08828"/></g>
<g transform="translate(125.5,83)"><path d="M9,0.600 L23,2 L14.300,23 L0.500,18 L2.500,16.500 L13.500,20.500 L20.500,3.500 L9.500,2.300 Z" fill="#ffe850" stroke="#e8c020" stroke-width="0.500"/><path d="M1.800,6 L11,2.500 L19.500,5 L11,9 Z" fill="#eef4ff"/><path d="M1.800,6 L11,9 L11,19.500 L1.800,16.500 Z" fill="url(#bf)"/><path d="M11,9 L19.500,5 L16.500,17.500 L11,19.500 Z" fill="#1c48d8"/><path d="M13.500,20.500 L20.500,3.500 L22,3.800 L15,21 Z" fill="#ffe850" stroke="#e8c020" stroke-width="0.400"/><path d="M1.800,6 L11,2.500 L19.500,5 M1.800,6 V16.500 L11,19.500" fill="none" stroke="#5078e8" stroke-width="0.600"/></g>
<g transform="translate(157.5,83)"><path d="M2,5 v14 a9.5,3.5 0 0 0 19,0 v-14z" fill="url(#cyl)" opacity="0.92"/><ellipse cx="11.5" cy="5" rx="9.5" ry="3.5" fill="#e4ecff" stroke="#3058e0" stroke-width="1"/><path d="M2,19 a9.5,3.5 0 0 0 19,0" fill="none" stroke="#2048d0" stroke-width="1"/><path d="M11.5,21 V12" stroke="#d02828" stroke-width="2.4"/><path d="M11.5,7 l4,6 h-8z" fill="#f09030"/></g>
<g transform="translate(187,83)"><path d="M3,3 V15 L17,22 M3,15 L10,12" fill="none" stroke="#2038c8" stroke-width="1"/><path d="M3,9 L9,6.5 L9.5,12 L17,15 L11,18 L3,15 Z" fill="#d0dcff" stroke="#2038c8" stroke-width="0.9" opacity="0.9"/><path d="M9.5,12 L3,15 M9.5,12 V18" stroke="#2038c8" stroke-width="0.8"/><path d="M3,12 V3 M10,12 L20,8 M11,18 L21,23" stroke="#d02020" stroke-width="1.2"/><path d="M3,0.5 l2.2,4 h-4.4z M22.5,7 l-4.5,-0.5 l1.5,3.5z M23,24 l-4.6,-0.2 l1.8,-3.4z" fill="#d02020"/></g>
<g transform="translate(224.5,83)"><path d="M22.500,17.500 l3,-0.500 l-11,6.500z" fill="#a8a49c" opacity="0.8"/><path d="M1,6 L10.500,1.800 L23,5.500 L14,10.200 Z" fill="#eef4ff"/><path d="M1,6 L14,10.200 L14,22.800 L1,17.500 Z" fill="url(#bf)"/><path d="M14,10.200 L23,5.500 L23,17.500 L14,22.800 Z" fill="url(#bs)"/><path d="M1,6 L10.500,1.800 L23,5.500 M1,6 V17.500 L14,22.800 L23,17.500 V5.500" fill="none" stroke="#5078e8" stroke-width="0.6"/></g>
<g transform="translate(278,83)"><circle cx="15.200" cy="8.200" r="7" fill="#209888" stroke="#0a4840" stroke-width="1.200"/><rect x="1.400" y="8.200" width="13.800" height="13.200" fill="#209888" stroke="#0a4840" stroke-width="1.200"/><path d="M8.200,8.200 A7,7 0 0 0 15.200,15.200" fill="none" stroke="#0a4840" stroke-width="1"/></g>
<g transform="translate(321,83)"><path d="M9,0.600 L23,2 L14.300,23 L0.500,18 L2.500,16.500 L13.500,20.500 L20.500,3.500 L9.500,2.300 Z" fill="#ffe850" stroke="#e8c020" stroke-width="0.500"/><path d="M1.800,6 L11,2.500 L19.500,5 L11,9 Z" fill="#eef4ff"/><path d="M1.800,6 L11,9 L11,19.500 L1.800,16.500 Z" fill="url(#bf)"/><path d="M11,9 L19.500,5 L16.500,17.500 L11,19.500 Z" fill="#1c48d8"/><path d="M13.500,20.500 L20.500,3.500 L22,3.800 L15,21 Z" fill="#ffe850" stroke="#e8c020" stroke-width="0.400"/><path d="M1.800,6 L11,2.500 L19.500,5 M1.800,6 V16.500 L11,19.500" fill="none" stroke="#5078e8" stroke-width="0.600"/></g>
<g transform="translate(364.5,83)"><path d="M0.500,13.800 L12,20 L23.500,13.800 L12,9 Z" fill="none" stroke="#2848d0" stroke-width="1"/><path d="M0.500,13.800 L6,5 M12,20 L11.500,14 M23.500,13.800 L17.300,5" fill="none" stroke="#e06838" stroke-width="1"/><path d="M6,5 L11.500,2 L17.300,5 L11.500,8 Z" fill="#e8f0ff" stroke="#4068e0" stroke-width="0.600"/><path d="M6,5 L11.500,8 V14.500 L6,11.500 Z" fill="url(#bf)"/><path d="M11.500,8 L17.300,5 V11.500 L11.500,14.500 Z" fill="#1c48d8"/></g>
<g transform="translate(394,83)"><path d="M21.500,18 l3,-0.500 l-4,3z" fill="#a8a49c"/><path d="M2.200,9 Q2.200,4 8,3.500 L18,4.200 Q21.500,5 21.500,8 L15,10.500 Q15,9 9,9 Z" fill="#ffb840"/><path d="M2.200,9 Q2.500,4.500 8,4 L18,4.500" fill="none" stroke="#f08010" stroke-width="1.200"/><path d="M2.200,9 Q3,7.500 8,7.200 Q15,7 15,10.500 L15,21.500 L2.200,17.500 Z" fill="url(#bf)"/><path d="M2.200,9 Q3,5 8,4.800 Q15,5 15,10.500 Q13,8.500 8,8.500 Q3.500,8.500 2.200,10.500Z" fill="url(#og)"/><path d="M15,10.500 L21.500,8 V18 L15,21.500 Z" fill="#1c48d8"/></g>
<g transform="translate(426,83)"><rect x="0" y="-0.400" width="24" height="24.400" fill="#c4e0f8"/><path d="M1,9.500 L16,13.500 V24 L1,24 Z" fill="url(#win)"/><path d="M16,13.500 L24,8.500 V24 H16 Z" fill="#88b8f8"/><path d="M1,6 L9.500,1 L24,5.500 L16,10.500 Z" fill="#ffe868" stroke="#e88018" stroke-width="0.900"/><path d="M1,6 L16,10.500 L16,13.500 L1,9.500 Z" fill="#f89030"/><path d="M16,10.500 L24,5.500 V8.500 L16,13.500Z" fill="#e87818"/><path d="M1,6 V24 M16,13.500 V24 M9.500,1 V3" stroke="#3858d0" stroke-width="0.800"/></g>
<g transform="translate(457,83)"><path d="M21,17.500 l3,-0.500 l-4,3z" fill="#a8a49c"/><path d="M1.800,7.500 L8,4.500 L11,5.500 L11,3.500 L16,1.200 L21.400,3.500 V16.500 L14.500,22.800 L1.800,17.500 Z" fill="#7098f0" stroke="#3860d8" stroke-width="0.700"/><path d="M1.800,7.500 L14.500,12 V22.800 L1.800,17.500 Z" fill="url(#bf)"/><path d="M14.500,12 L21.400,3.500 V16.500 L14.500,22.800 Z" fill="#2858e0"/><path d="M11,3.500 L16,1.200 L21.400,3.500 L16.500,6 Z" fill="#dce8ff"/><path d="M3.500,10 L8,11.500 L8,8 L11,6.500 L14,8.500 V11.500 L11,13 V15 L13.500,16 V19.500 L3.500,16 Z" fill="#ffb838" stroke="#e88818" stroke-width="0.600"/><path d="M5,12 L11.500,14.200 V17.200 L5,15 Z" fill="#ffe080"/></g>
<g transform="translate(488,83)"><path d="M21.500,17.500 l3,-0.500 l-4,3z" fill="#a8a49c"/><path d="M5,9 Q10,4 21.500,5.500 V17.500 L12,21.500 L5,18 Z" fill="url(#bf)"/><path d="M12,11 Q16.500,6 21.500,5.500 V17.500 L12,21.500 Z" fill="#2050d8"/><path d="M5,9 Q10,4 21.500,5.500 Q16,6.500 12,11 Z" fill="#eaf0ff"/><path d="M0.500,10 Q1.500,4.500 9,3.500 L20,3 M0.500,10 L1,18.500 L9.500,22.500 M1,18.500 Q2,13.500 8,13 M12,4 V21" fill="none" stroke="#e03828" stroke-width="0.900" stroke-dasharray="1.800,1.200"/></g>
<g transform="translate(518.5,83)"><path d="M22,18 l3,-0.500 l-4,3z" fill="#a8a49c"/><path d="M1.300,5.500 L9,2 L23,4.500 L16,8 Z" fill="#eef4ff"/><path d="M1.300,5.500 L16,8 V22 L1.300,18.500 Z" fill="url(#bf)"/><path d="M16,8 L23,4.500 V18 L16,22 Z" fill="url(#bs)"/><ellipse cx="7.600" cy="11.400" rx="4.200" ry="4.500" fill="url(#og)" stroke="#fff4c8" stroke-width="0.800"/><path d="M4.200,9.500 a4,4.300 0 0 1 7,-0.500 a5,5 0 0 0 -7,0.500z" fill="#c86000"/></g>
<g transform="translate(556,83)"><path d="M0,9 L5,5.500 L12,6 L12,17 L7,19.500 L0,18.500 Z" fill="url(#bf)" stroke="#4870e0" stroke-width="0.700"/><path d="M0,9 L5,5.500 L12,6 L7,9.500Z" fill="#eef4ff" stroke="#4870e0" stroke-width="0.500"/><path d="M12,6 L17,4.500 L23.800,5 V15.500 L18,19 L10,18.500 L10,8.500 Z" fill="#ffd080" fill-opacity="0.900" stroke="#e86818" stroke-width="0.900" stroke-dasharray="1.800,1"/><path d="M10,8.500 L18,9 V19 M18,9 L23.800,5" fill="none" stroke="#e86818" stroke-width="0.800" stroke-dasharray="1.800,1"/><path d="M18,9 L23.800,5 V15.500 L18,19Z" fill="#f8a848" opacity="0.700"/></g>
<g transform="translate(586.5,83)"><path d="M21.500,17.500 l3,-0.500 l-4,3z" fill="#a8a49c"/><path d="M1.800,5 L9,2 L22.500,4.500 L15,7.500 Z" fill="#eef4ff"/><path d="M1.800,5 L15,7.500 V21.300 L1.800,17.500 Z" fill="url(#bf)"/><path d="M15,7.500 L22.500,4.500 V17.500 L15,21.300 Z" fill="url(#bs)"/><ellipse cx="5.2" cy="9" rx="2.700" ry="2.800" fill="url(#og)" stroke="#fff0c0" stroke-width="0.600"/><path d="M2.9,8 a2.500,2.600 0 0 1 4.500,-0.300 a3.500,3.500 0 0 0 -4.500,0.300z" fill="#c05800"/><ellipse cx="11.2" cy="10.3" rx="2.700" ry="2.800" fill="url(#og)" stroke="#fff0c0" stroke-width="0.600"/><path d="M8.9,9.3 a2.500,2.600 0 0 1 4.500,-0.300 a3.500,3.500 0 0 0 -4.500,0.300z" fill="#c05800"/><ellipse cx="5.2" cy="15.2" rx="2.700" ry="2.800" fill="url(#og)" stroke="#fff0c0" stroke-width="0.600"/><path d="M2.9,14.2 a2.500,2.600 0 0 1 4.500,-0.300 a3.500,3.500 0 0 0 -4.500,0.300z" fill="#c05800"/><ellipse cx="11.2" cy="16.8" rx="2.700" ry="2.800" fill="url(#og)" stroke="#fff0c0" stroke-width="0.600"/><path d="M8.9,15.8 a2.500,2.600 0 0 1 4.500,-0.300 a3.500,3.500 0 0 0 -4.500,0.300z" fill="#c05800"/></g>
<g transform="translate(640,83)"><path d="M3,19.700 L20,3.500" stroke="#101010" stroke-width="1.400"/><circle cx="3" cy="19.700" r="1.900" fill="#d82020"/><circle cx="20" cy="3.500" r="1.900" fill="#d82020"/></g>
<g transform="translate(671.5,83)"><path d="M3,3.500 Q17,3 20.300,19" fill="none" stroke="#101010" stroke-width="1.400"/><circle cx="3" cy="3.500" r="1.900" fill="#d82020"/><circle cx="15.500" cy="6.800" r="1.900" fill="#d82020"/><circle cx="20.300" cy="19" r="1.900" fill="#d82020"/></g>
<g transform="translate(708.5,83)"><ellipse cx="11.5" cy="5.5" rx="10" ry="4" fill="none" stroke="#2848a8" stroke-width="1.400" transform="rotate(8 11.5 5.5)"/><ellipse cx="11.8" cy="8.5" rx="10" ry="4" fill="none" stroke="#4870d0" stroke-width="1.400" transform="rotate(8 11.5 8.5)"/><ellipse cx="12.1" cy="11.5" rx="10" ry="4" fill="none" stroke="#2848a8" stroke-width="1.400" transform="rotate(8 11.5 11.5)"/><ellipse cx="12.4" cy="14.5" rx="10" ry="4" fill="none" stroke="#4870d0" stroke-width="1.400" transform="rotate(8 11.5 14.5)"/><ellipse cx="12.7" cy="17.5" rx="10" ry="4" fill="none" stroke="#2848a8" stroke-width="1.400" transform="rotate(8 11.5 17.5)"/><path d="M21,18.500 Q21,22.500 15,22.500" fill="none" stroke="#2848a8" stroke-width="1.300"/></g>
<g transform="translate(739,83)"><path d="M1.500,21.300 V9 L7.800,2 H16 L18.500,7.300 Q24.200,9 24.200,14 Q24.200,19 18.500,21.300 Z" fill="#fafafa" stroke="#101010" stroke-width="1.400" stroke-linejoin="round"/><path d="M5,18 V10.500 L9.500,5.500 H13.500 L15.500,10 Q20.500,10.500 20.500,14.200 Q20.500,17.500 16.500,18 Z" fill="none" stroke="#d02828" stroke-width="1.300" stroke-linejoin="round"/></g>
<g transform="translate(770,83)"><path d="M2.200,11.400 L7.500,10.600 L16.200,13.400 L21.600,10 M8.500,2.400 L7.500,10.600 M8.500,2.400 L2.200,11.400 M16.200,13.400 L15.400,20.500 M21.600,10 L15.400,20.500" fill="none" stroke="#505050" stroke-width="0.900"/><g fill="#909090"><circle cx="8.500" cy="2.400" r="1.700"/><circle cx="2.200" cy="11.400" r="1.700"/><circle cx="21.600" cy="10" r="1.700"/><circle cx="15.400" cy="20.500" r="1.700"/></g><circle cx="7.500" cy="10.600" r="2" fill="#e02020"/><circle cx="16.200" cy="13.400" r="2" fill="#e02020"/></g>
<g transform="translate(813,83)"><rect x="5" y="1" width="16" height="1.800" fill="#101010"/><path d="M12.500,3 V8" stroke="#f07020" stroke-width="2.400"/><path d="M12.500,11.500 l-3.800,-4 h7.600z" fill="#f07020"/><path d="M1,13.500 Q5,9.500 11,12 Q17,14.500 23.300,11.500 L21,20 Q16,24 10,21.500 Q5,19.500 3.500,21.500 Z" fill="#5890e8" stroke="#2858d0" stroke-width="0.800"/><path d="M4,16 Q8,13 13,15.800 Q18,18 21.500,15" fill="none" stroke="#e03020" stroke-width="1.700"/><path d="M3.500,21.500 Q5,19.500 10,21.500 Q16,24 21,20" fill="none" stroke="#c8dcff" stroke-width="1.200"/></g>
<path d="M255,102 h7 l-3.5,4 z" fill="#000"/>
<path d="M616.8,102 h7 l-3.5,4 z" fill="#000"/>
<path d="M854.6,102 h7 l-3.5,4 z" fill="#000"/>
<path d="M309,94 h7 l-3.5,4 z" fill="#000"/>
<path d="M351.9,94 h7 l-3.5,4 z" fill="#000"/>
<path d="M801.1,94 h7 l-3.5,4 z" fill="#000"/>
<path d="M843.8,94 h7 l-3.5,4 z" fill="#000"/>
<svg x="1" y="736" width="1033" height="26" viewBox="1 736 1033 26" overflow="hidden">
<rect x="39" y="738" width="1" height="24" fill="#606060"/><rect x="40" y="738" width="1" height="24" fill="#fff"/>
<rect x="355" y="738" width="1" height="24" fill="#606060"/><rect x="356" y="738" width="1" height="24" fill="#fff"/>
<rect x="423" y="738" width="1" height="24" fill="#606060"/><rect x="424" y="738" width="1" height="24" fill="#fff"/>
<rect x="522" y="738" width="1" height="24" fill="#606060"/><rect x="523" y="738" width="1" height="24" fill="#fff"/>
<rect x="570" y="736" width="1" height="26" fill="#707070"/><rect x="571" y="736" width="1" height="26" fill="#fff"/>
<g transform="translate(10,741)"><path d="M3,6 L6,2 L14,1 L20,4 L21,12 L16,16 L6,16 L2,12 Z" fill="#a4a8a4"/><path d="M5,4 l8,-1.5 l5,2.5 l-7,2z" fill="#c0c4c0"/><path d="M8,12 L19,11 L22,16 L20,24 H10 Z" fill="#aca890"/><path d="M1,10 h6 v5 h-6z" fill="#989c98"/></g>
<g transform="translate(46,741)"><path d="M1,5.4 l4.9,-2.4 l6.1,1.5 l-4.4,3 z" fill="#ffe038" stroke="#f0a820" stroke-width="0.500"/><path d="M1,5.4 l6.6,2.1 v5.5 l-6.6,-2.1 z" fill="url(#yf3)" stroke="#f4b020" stroke-width="0.600"/><path d="M7.6,7.5 l4.4,-3 v4.9 l-4.4,3.6 z" fill="url(#ys3)" stroke="#e89810" stroke-width="0.500"/><path d="M0,15.4 l4.9,-2.4 l6.1,1.5 l-4.4,3 z" fill="#ffe038" stroke="#f0a820" stroke-width="0.500"/><path d="M0,15.4 l6.6,2.1 v5.5 l-6.6,-2.1 z" fill="url(#yf3)" stroke="#f4b020" stroke-width="0.600"/><path d="M6.6,17.5 l4.4,-3 v4.9 l-4.4,3.6 z" fill="url(#ys3)" stroke="#e89810" stroke-width="0.500"/><path d="M9,16.4 l4.9,-2.4 l6.1,1.5 l-4.4,3 z" fill="#ffe038" stroke="#f0a820" stroke-width="0.500"/><path d="M9,16.4 l6.6,2.1 v5.5 l-6.6,-2.1 z" fill="url(#yf3)" stroke="#f4b020" stroke-width="0.600"/><path d="M15.6,18.5 l4.4,-3 v4.9 l-4.4,3.6 z" fill="url(#ys3)" stroke="#e89810" stroke-width="0.500"/><path d="M13.5,6 h9 M18,1.5 v9" stroke="#1838d0" stroke-width="2.2"/></g>
<g transform="translate(77,741)"><path d="M2,5.4 l4.9,-2.4 l6.1,1.5 l-4.4,3 z" fill="#ffe038" stroke="#f0a820" stroke-width="0.500"/><path d="M2,5.4 l6.6,2.1 v5.5 l-6.6,-2.1 z" fill="url(#yf3)" stroke="#f4b020" stroke-width="0.600"/><path d="M8.6,7.5 l4.4,-3 v4.9 l-4.4,3.6 z" fill="url(#ys3)" stroke="#e89810" stroke-width="0.500"/><path d="M1,15.64 l5.3,-2.64 l6.7,1.65 l-4.8,3.3 z" fill="#ffe038" stroke="#f0a820" stroke-width="0.500"/><path d="M1,15.64 l7.2,2.31 v6.05 l-7.2,-2.31 z" fill="url(#yf3)" stroke="#f4b020" stroke-width="0.600"/><path d="M8.2,17.95 l4.8,-3.3 v5.39 l-4.8,3.96 z" fill="url(#ys3)" stroke="#e89810" stroke-width="0.500"/><path d="M9,16.4 l5.3,-2.4 l6.7,1.5 l-4.8,3 z" fill="#ffe038" stroke="#f0a820" stroke-width="0.500"/><path d="M9,16.4 l7.2,2.1 v5.5 l-7.2,-2.1 z" fill="url(#yf3)" stroke="#f4b020" stroke-width="0.600"/><path d="M16.2,18.5 l4.8,-3 v4.9 l-4.8,3.6 z" fill="url(#ys3)" stroke="#e89810" stroke-width="0.500"/><g stroke="#e8e020" stroke-width="1.3"><path d="M2.1196,3.80798 L13.8804,6.19202"/><path d="M3.50343,1.02748 L12.4966,8.97252"/><path d="M6.09212,-0.688583 L9.90788,10.6886"/><path d="M9.19202,-0.880399 L6.80798,10.8804"/><path d="M11.9725,0.503433 L4.02748,9.49657"/><path d="M13.6886,3.09212 L2.31142,6.90788"/></g><circle cx="8" cy="5" r="2.5" fill="#ffff60"/><path d="M8,4 l-2,-5 M9,5 l5,3" stroke="#3050c0" stroke-width="0.8"/><path d="M14.5,6 h9 M19,1.5 v9" stroke="#1838d0" stroke-width="2.2"/></g>
<g transform="translate(106,741)"><g stroke="#e8e020" stroke-width="1.3"><path d="M2.1196,4.80798 L13.8804,7.19202"/><path d="M3.50343,2.02748 L12.4966,9.97252"/><path d="M6.09212,0.311417 L9.90788,11.6886"/><path d="M9.19202,0.119601 L6.80798,11.8804"/><path d="M11.9725,1.50343 L4.02748,10.4966"/><path d="M13.6886,4.09212 L2.31142,7.90788"/></g><circle cx="8" cy="6" r="2.5" fill="#ffff60"/><path d="M8,5 l-2,-5 M9,6 l5,3" stroke="#3050c0" stroke-width="0.8"/><rect x="13.5" y="7.5" width="6" height="6" fill="#fff8c0" stroke="#d02020" stroke-width="1.2"/><path d="M14,13 V24" stroke="#1828a0" stroke-width="1.3"/><rect x="16.5" y="15.5" width="5" height="5" fill="#fff8a0" stroke="#707070" stroke-width="1"/></g>
<g transform="translate(139,741)"><path d="M0,13.4 l4.5,-2.4 l5.5,1.5 l-4,3 z" fill="#ffe038" stroke="#f0a820" stroke-width="0.500"/><path d="M0,13.4 l6,2.1 v5.5 l-6,-2.1 z" fill="url(#yf3)" stroke="#f4b020" stroke-width="0.600"/><path d="M6,15.5 l4,-3 v4.9 l-4,3.6 z" fill="url(#ys3)" stroke="#e89810" stroke-width="0.500"/><path d="M7,14.4 l4.5,-2.4 l5.5,1.5 l-4,3 z" fill="#ffe038" stroke="#f0a820" stroke-width="0.500"/><path d="M7,14.4 l6,2.1 v5.5 l-6,-2.1 z" fill="url(#yf3)" stroke="#f4b020" stroke-width="0.600"/><path d="M13,16.5 l4,-3 v4.9 l-4,3.6 z" fill="url(#ys3)" stroke="#e89810" stroke-width="0.500"/><path d="M14,15.4 l4.5,-2.4 l5.5,1.5 l-4,3 z" fill="#ffe038" stroke="#f0a820" stroke-width="0.500"/><path d="M14,15.4 l6,2.1 v5.5 l-6,-2.1 z" fill="url(#yf3)" stroke="#f4b020" stroke-width="0.600"/><path d="M20,17.5 l4,-3 v4.9 l-4,3.6 z" fill="url(#ys3)" stroke="#e89810" stroke-width="0.500"/><path d="M14.5,5 h9 M19,0.5 v9" stroke="#1838d0" stroke-width="2.2"/></g>
<g transform="translate(170,741)"><path d="M5,2 L12.5,7 L5,12 Z M20,2 L12.5,7 L20,12 Z" fill="#1838d0"/><path d="M12.5,0 V24" stroke="#303030" stroke-width="1" stroke-dasharray="2,1.5"/><rect x="1.5" y="14.5" width="8.5" height="8" fill="#fff040" stroke="#c0a000" stroke-width="0.8"/><path d="M14,13 L14,24 L25,24 Z" fill="#e02030"/></g>
<g transform="translate(201,741)"><path d="M4,10.12 l6.1,-3.12 l7.9,1.95 l-5.6,3.9 z" fill="#ffe038" stroke="#f0a820" stroke-width="0.500"/><path d="M4,10.12 l8.4,2.73 v7.15 l-8.4,-2.73 z" fill="url(#yf3)" stroke="#f4b020" stroke-width="0.600"/><path d="M12.4,12.85 l5.6,-3.9 v6.37 l-5.6,4.68 z" fill="url(#ys3)" stroke="#e89810" stroke-width="0.500"/><path d="M12,3 h4 v4 M16,0.5 h5 v5 M20,-2 h4 v4" fill="none" stroke="#1838a8" stroke-width="1.4"/><path d="M2,16 v5 h4 M0,20 v4 h4" fill="none" stroke="#1838a8" stroke-width="1.4"/></g>
<g transform="translate(233,741)"><path d="M1,10 L8,4 L12,5 V20 L6,23 L1,18 Z" fill="#ffe0a0" stroke="#f0b850" stroke-width="0.8"/><path d="M8,8.16 l4.5,-2.16 l5.5,1.35 l-4,2.7 z" fill="#ffe038" stroke="#f0a820" stroke-width="0.500"/><path d="M8,8.16 l6,1.89 v4.95 l-6,-1.89 z" fill="url(#yf3)" stroke="#f4b020" stroke-width="0.600"/><path d="M14,10.05 l4,-2.7 v4.41 l-4,3.24 z" fill="url(#ys3)" stroke="#e89810" stroke-width="0.500"/><path d="M12,15.16 l4.5,-2.16 l5.5,1.35 l-4,2.7 z" fill="#ffe038" stroke="#f0a820" stroke-width="0.500"/><path d="M12,15.16 l6,1.89 v4.95 l-6,-1.89 z" fill="url(#yf3)" stroke="#f4b020" stroke-width="0.600"/><path d="M18,17.05 l4,-2.7 v4.41 l-4,3.24 z" fill="url(#ys3)" stroke="#e89810" stroke-width="0.500"/></g>
<g transform="translate(263,741)"><path d="M1,4.88 l5.7,-2.88 l7.3,1.8 l-5.2,3.6 z" fill="#ffe038" stroke="#f0a820" stroke-width="0.500"/><path d="M1,4.88 l7.8,2.52 v6.6 l-7.8,-2.52 z" fill="url(#yf3)" stroke="#f4b020" stroke-width="0.600"/><path d="M8.8,7.4 l5.2,-3.6 v5.88 l-5.2,4.32 z" fill="url(#ys3)" stroke="#e89810" stroke-width="0.500"/><path d="M11,14.688 l5.44,-2.688 l7.56,1.68 l-4.94,3.36 z" fill="#e8f0fc" stroke="#88a8d8" stroke-width="0.6"/><path d="M11,14.688 l8.06,2.352 v6.96 l-8.06,-2.352 z" fill="#c8d8f0" stroke="#88a8d8" stroke-width="0.6"/><path d="M19.06,17.04 l4.94,-3.36 v6.288 l-4.94,4.032 z" fill="#90b0e0" stroke="#7898d0" stroke-width="0.6"/><path d="M3,15 Q4,19 9,19" fill="none" stroke="#e04020" stroke-width="1.6"/><path d="M7.5,16 l4,3.2 l-5,2z" fill="#e04020"/></g>
<g transform="translate(295,741)"><path d="M10,3.136 l5.82,-3.136 l8.18,1.96 l-5.32,3.92 z" fill="#e8f0fc" stroke="#88a8d8" stroke-width="0.6"/><path d="M10,3.136 l8.68,2.744 v8.12 l-8.68,-2.744 z" fill="#c8d8f0" stroke="#88a8d8" stroke-width="0.6"/><path d="M18.68,5.88 l5.32,-3.92 v7.336 l-5.32,4.704 z" fill="#90b0e0" stroke="#7898d0" stroke-width="0.6"/><path d="M2,22 l8,-8" stroke="#b88810" stroke-width="4.600" stroke-linecap="round"/><path d="M2,22 l8,-8" stroke="#fcd850" stroke-width="3" stroke-linecap="round"/><circle cx="11.5" cy="12.5" r="4.200" fill="#fcd850" stroke="#b88810" stroke-width="0.800"/><path d="M11.3,11.2 l4.500,-1.500 l-1.500,4.500 z" fill="#dbd8d0"/><circle cx="9.6" cy="14.4" r="1.300" fill="#fff8c0"/></g>
<g transform="translate(326,741)"><g fill="#fff060" stroke="#202020" stroke-width="1.1"><rect x="10.500" y="1.5" width="6" height="6"/><rect x="10.5" y="7.5" width="6" height="6"/><rect x="16.5" y="7.5" width="6" height="6"/></g><path d="M2,22 l8,-8" stroke="#b88810" stroke-width="4.600" stroke-linecap="round"/><path d="M2,22 l8,-8" stroke="#fcd850" stroke-width="3" stroke-linecap="round"/><circle cx="11.5" cy="12.5" r="4.200" fill="#fcd850" stroke="#b88810" stroke-width="0.800"/><path d="M11.3,11.2 l4.500,-1.500 l-1.500,4.500 z" fill="#dbd8d0"/><circle cx="9.6" cy="14.4" r="1.300" fill="#fff8c0"/></g>
<g transform="translate(362,741)"><path d="M1,4.4 l4.9,-2.4 l6.1,1.5 l-4.4,3 z" fill="#ffe038" stroke="#f0a820" stroke-width="0.500"/><path d="M1,4.4 l6.6,2.1 v5.5 l-6.6,-2.1 z" fill="url(#yf3)" stroke="#f4b020" stroke-width="0.600"/><path d="M7.6,6.5 l4.4,-3 v4.9 l-4.4,3.6 z" fill="url(#ys3)" stroke="#e89810" stroke-width="0.500"/><path d="M0,15.64 l4.9,-2.64 l6.1,1.65 l-4.4,3.3 z" fill="#ffe038" stroke="#f0a820" stroke-width="0.500"/><path d="M0,15.64 l6.6,2.31 v6.05 l-6.6,-2.31 z" fill="url(#yf3)" stroke="#f4b020" stroke-width="0.600"/><path d="M6.6,17.95 l4.4,-3.3 v5.39 l-4.4,3.96 z" fill="url(#ys3)" stroke="#e89810" stroke-width="0.500"/><path d="M11,15.64 l5.3,-2.64 l6.7,1.65 l-4.8,3.3 z" fill="#ffe038" stroke="#f0a820" stroke-width="0.500"/><path d="M11,15.64 l7.2,2.31 v6.05 l-7.2,-2.31 z" fill="url(#yf3)" stroke="#f4b020" stroke-width="0.600"/><path d="M18.2,17.95 l4.8,-3.3 v5.39 l-4.8,3.96 z" fill="url(#ys3)" stroke="#e89810" stroke-width="0.500"/></g>
<g transform="translate(396,741)"><g stroke="#303030" stroke-width="1"><rect x="9.5" y="1.5" width="6" height="6" fill="#fff"/><rect x="5.5" y="7.5" width="6" height="6" fill="#fff"/></g><rect x="1.5" y="13.5" width="7" height="7" fill="#ffe040" stroke="#d02020" stroke-width="1.2"/></g>
<g transform="translate(431,741)"><path d="M1,5 Q1,3 5,3 H10 V18 H5 Q1,18 1,16 Z M1,10 H10" fill="#e0e4e4" stroke="#a0a4a8" stroke-width="0.8"/><path d="M2,18 h16 v4 h-16z" fill="#d0d4d4" stroke="#a0a4a8" stroke-width="0.6"/><path d="M7,5.36 l6.1,-3.36 l7.9,2.1 l-5.6,4.2 z" fill="#ffe038" stroke="#f0a820" stroke-width="0.500"/><path d="M7,5.36 l8.4,2.94 v7.7 l-8.4,-2.94 z" fill="url(#yf3)" stroke="#f4b020" stroke-width="0.600"/><path d="M15.4,8.3 l5.6,-4.2 v6.86 l-5.6,5.04 z" fill="url(#ys3)" stroke="#e89810" stroke-width="0.500"/></g>
<g transform="translate(462,741)"><path d="M1,6 v14 h4" fill="none" stroke="#404040" stroke-width="1" stroke-dasharray="2,1.5"/><rect x="4.5" y="1.5" width="18" height="17" fill="url(#win)" stroke="#2038c8" stroke-width="1.3"/><rect x="5" y="2" width="17" height="2.5" fill="#2848d0"/><path d="M8,8.64 l4.9,-2.64 l6.1,1.65 l-4.4,3.3 z" fill="#ffe038" stroke="#f0a820" stroke-width="0.500"/><path d="M8,8.64 l6.6,2.31 v6.05 l-6.6,-2.31 z" fill="url(#yf3)" stroke="#f4b020" stroke-width="0.600"/><path d="M14.6,10.95 l4.4,-3.3 v5.39 l-4.4,3.96 z" fill="url(#ys3)" stroke="#e89810" stroke-width="0.500"/></g>
<g transform="translate(497,741)"><ellipse cx="6" cy="8" rx="4" ry="6.5" fill="none" stroke="#c8a818" stroke-width="2.4"/><ellipse cx="6" cy="8" rx="4" ry="6.5" fill="none" stroke="#f8e860" stroke-width="1"/><ellipse cx="9.5" cy="17" rx="4" ry="6.5" fill="none" stroke="#c8a818" stroke-width="2.4"/><ellipse cx="9.5" cy="17" rx="4" ry="6.5" fill="none" stroke="#f8e860" stroke-width="1"/></g>
<g transform="translate(531,741)"><path d="M2,2 h4 M12,2 h-4" stroke="#e05010" stroke-width="1.4"/><path d="M6.5,2 l-2.5,-2 v4z M7.500,2 l2.500,-2 v4z" fill="#e05010"/><g fill="#f8e840" stroke="#a09010" stroke-width="0.8"><rect x="8.5" y="6.5" width="6" height="6"/><rect x="2.5" y="12.5" width="6" height="6"/><rect x="8.5" y="12.5" width="6" height="6"/></g><path d="M10,19 l3,3 l7,-8" fill="none" stroke="#18b028" stroke-width="2.4"/></g>
<path d="M559.5,759 h7 l-3.5,4z" fill="#000"/>
</svg>
</svg>
<div id="frame"></div>
</body></html>
